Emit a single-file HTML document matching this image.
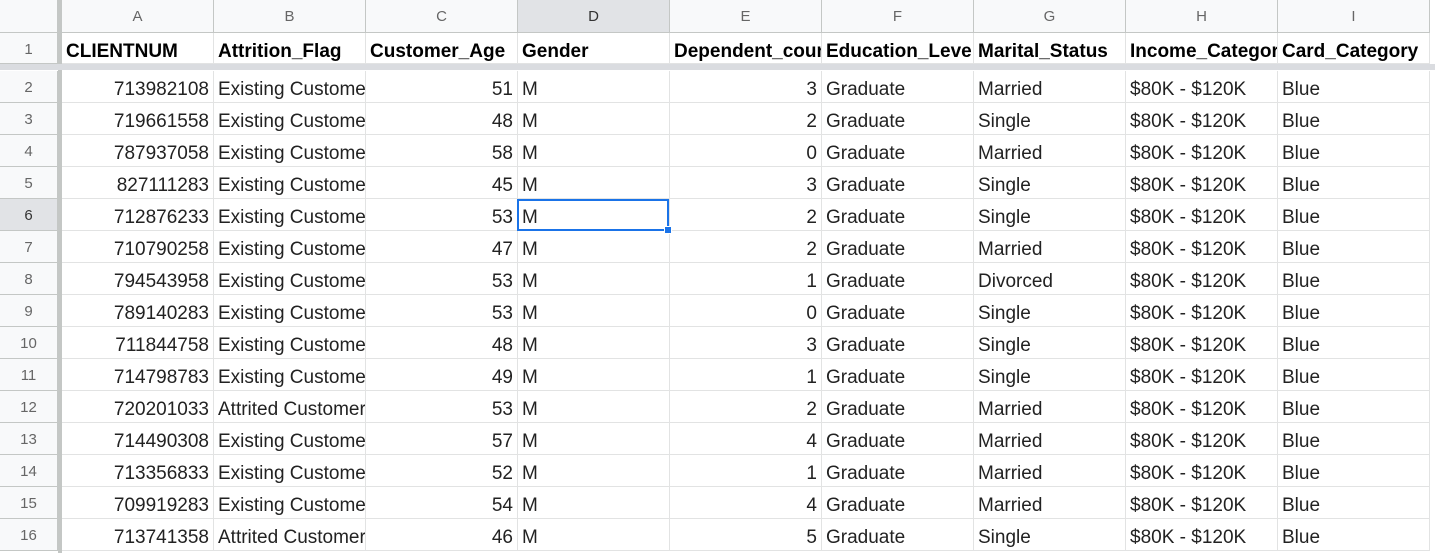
<!DOCTYPE html>
<html><head><meta charset="utf-8"><style>
body{margin:0;background:#fff;width:1435px;height:553px;overflow:hidden;font-family:"Liberation Sans",Arial,sans-serif}
.c{position:absolute;box-sizing:border-box;border-right:1px solid #e2e3e3;border-bottom:1px solid #e2e3e3;overflow:hidden;white-space:nowrap;font-size:19px;color:#222;padding:3px 4px 0 4px;line-height:31px}
.h{background:#f8f9fa;color:#666;font-size:15px;text-align:center;border-color:#c4c7c5;padding-top:1px}
.sel{background:#e1e3e6;color:#333}
.r{text-align:right}
.b{font-weight:bold;color:#000}
</style></head><body>
<div id="g"></div>
<div style="position:absolute;left:58px;top:0;width:4px;height:553px;background:#c4c7c5"></div>
<div style="position:absolute;left:0;top:64px;width:1435px;height:6px;background:#dadce0"></div>
<div style="position:absolute;left:517px;top:199px;width:152px;height:32px;box-sizing:border-box;border:2px solid #1a73e8"></div>
<div style="position:absolute;left:664px;top:226px;width:8px;height:8px;background:#1a73e8;border:1px solid #fff;box-sizing:border-box"></div>
<script>
const cols=["A","B","C","D","E","F","G","H","I"];
const hdr=["CLIENTNUM","Attrition_Flag","Customer_Age","Gender","Dependent_count","Education_Level","Marital_Status","Income_Category","Card_Category"];
const d=[
["713982108","Existing Customer","51","3","Married"],
["719661558","Existing Customer","48","2","Single"],
["787937058","Existing Customer","58","0","Married"],
["827111283","Existing Customer","45","3","Single"],
["712876233","Existing Customer","53","2","Single"],
["710790258","Existing Customer","47","2","Married"],
["794543958","Existing Customer","53","1","Divorced"],
["789140283","Existing Customer","53","0","Single"],
["711844758","Existing Customer","48","3","Single"],
["714798783","Existing Customer","49","1","Single"],
["720201033","Attrited Customer","53","2","Married"],
["714490308","Existing Customer","57","4","Married"],
["713356833","Existing Customer","52","1","Married"],
["709919283","Existing Customer","54","4","Married"],
["713741358","Attrited Customer","46","5","Single"]];
let h="";
const X=i=>62+i*152;
function cell(x,y,w,hh,cls,t){h+=`<div class="c ${cls}" style="left:${x}px;top:${y}px;width:${w}px;height:${hh}px">${t}</div>`;}
cell(0,0,58,33,"h","");
cols.forEach((c,i)=>cell(X(i),0,152,33,"h"+(i==3?" sel":""),c));
cell(0,33,58,31,"h","1");
hdr.forEach((t,i)=>cell(X(i),33,152,31,"b",t));
d.forEach((r,k)=>{const y=71+k*32;const n=k+2;
cell(0,y,58,32,"h"+(n==6?" sel":""),n);
const v=[r[0],r[1],r[2],"M",r[3],"Graduate",r[4],"$80K - $120K","Blue"];
v.forEach((t,i)=>cell(X(i),y,152,32,(i==0||i==2||i==4)?"r":"",t));});
document.getElementById("g").outerHTML=h;
</script>
</body></html>
